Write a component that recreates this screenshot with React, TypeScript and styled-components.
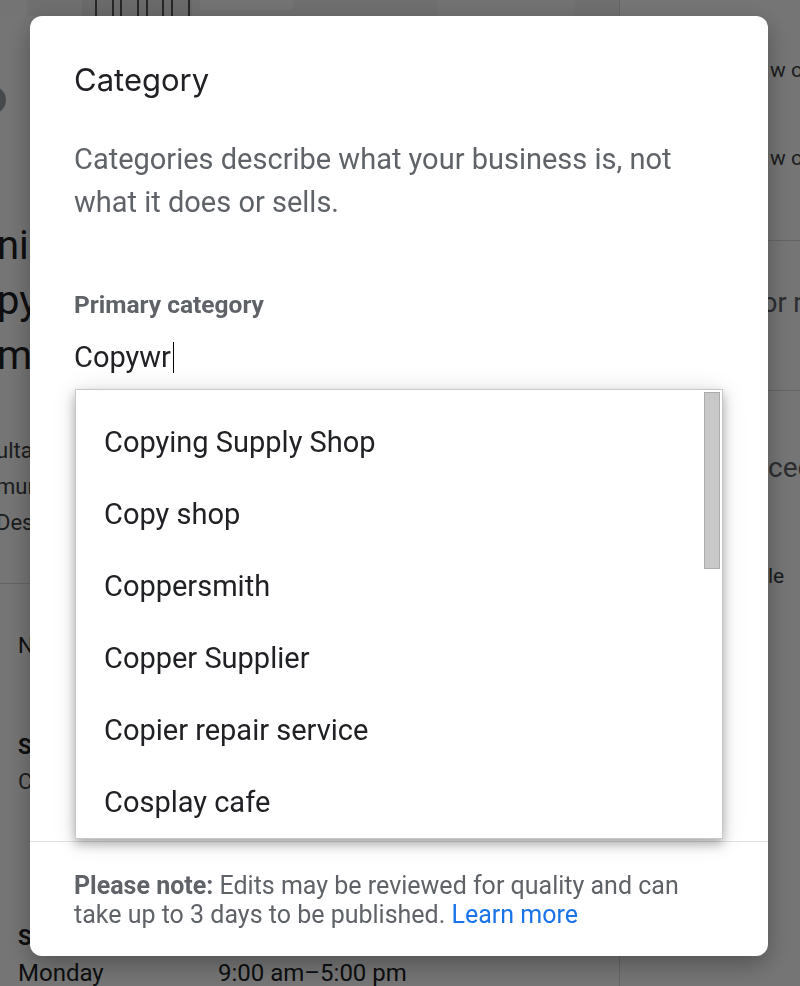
import React from "react";
import styled, { createGlobalStyle } from "styled-components";

const Global = createGlobalStyle`
  html, body { margin: 0; padding: 0; background: #fff; }
  body { font-family: Roboto, "Liberation Sans", Arial, sans-serif; overflow: hidden; }
  * { box-sizing: border-box; }
`;

/* ---------- underlying page ---------- */
const Page = styled.div`
  display: grid;
  grid-template-columns: 619px 1fr;
  height: 986px;
  overflow: hidden;
  background: #fff;
  color: #202124;
`;

const LeftCol = styled.div`
  display: flex;
  flex-direction: column;
  overflow: hidden;
  & > * { flex: none; }
`;

const TopArt = styled.svg`
  display: block;
`;

const Avatar = styled.div`
  width: 28px;
  height: 28px;
  border-radius: 50%;
  background: #9aa0a6;
  margin: 70px 0 0 -22px;
`;

const BigTitle = styled.div`
  margin: 104px 0 0 -3px;
  font-size: 40px;
  line-height: 55px;
  color: #202124;
  white-space: nowrap;
`;

const SmallLines = styled.div`
  margin: 50px 0 0 -4px;
  font-size: 22px;
  line-height: 36px;
  color: #3c4043;
  white-space: nowrap;
`;

const Rule = styled.hr`
  margin: 42px 0 0;
  border: 0;
  height: 1px;
  background: #dadce0;
`;

const Section = styled.div<{ $top: number }>`
  margin-top: ${(p) => p.$top}px;
  padding-left: 18px;
  font-size: 22px;
  line-height: 30px;
  color: #202124;
  white-space: nowrap;
`;

const SectionTitle = styled.div`
  font-weight: 700;
  font-size: 22px;
  line-height: 35px;
`;

const SectionText = styled.div`
  font-size: 22px;
  line-height: 35px;
  color: #3c4043;
`;

const HoursBlock = styled.div`
  margin-top: 121px;
  padding-left: 18px;
  font-size: 24px;
  line-height: 36px;
  color: #202124;
  white-space: nowrap;
`;

const HoursRow = styled.div`
  display: grid;
  grid-template-columns: 200px auto;
`;

const RightCol = styled.div`
  border-left: 1px solid #dadce0;
  display: flex;
  flex-direction: column;
  overflow: hidden;
  & > * { flex: none; }
`;

const SideItem = styled.div<{ $size: number; $lh: number; $top: number; $indent: number; $grey?: boolean }>`
  margin-top: ${(p) => p.$top}px;
  padding-left: ${(p) => p.$indent}px;
  font-size: ${(p) => p.$size}px;
  line-height: ${(p) => p.$lh}px;
  color: ${(p) => (p.$grey ? "#5f6368" : "#3c4043")};
  white-space: nowrap;
`;

const SideRule = styled.div<{ $top: number }>`
  margin-top: ${(p) => p.$top}px;
  height: 1px;
  background: #dadce0;
`;

/* ---------- dialog ---------- */
const Overlay = styled.div`
  position: fixed;
  inset: 0;
  background: rgba(0, 0, 0, 0.54);
  display: flex;
  align-items: flex-start;
  justify-content: flex-start;
  padding: 16px 0 0 30px;
`;

const Dialog = styled.div`
  width: 738px;
  height: 940px;
  background: #fff;
  border-radius: 12px;
  box-shadow: 0 8px 24px rgba(0, 0, 0, 0.3);
  display: flex;
  flex-direction: column;
  overflow: hidden;
`;

const Title = styled.h2`
  margin: 0;
  padding: 44px 44px 0;
  font-family: Inter, "Open Sans", sans-serif;
  font-size: 31px;
  font-weight: 400;
  line-height: 40px;
  color: #202124;
`;

const Body = styled.div`
  flex: 1;
  padding: 38px 44px 0;
`;

const Description = styled.p`
  margin: 0;
  font-size: 29px;
  line-height: 43px;
  color: #5f6368;
`;

const FieldLabel = styled.div`
  margin-top: 66px;
  font-size: 24.5px;
  font-weight: 700;
  line-height: 30px;
  color: #5f6368;
`;

const Field = styled.div`
  position: relative;
  margin-top: 19px;
`;

const InputText = styled.div`
  display: flex;
  align-items: center;
  font-size: 29px;
  line-height: 36px;
  color: #202124;
`;

const Caret = styled.span`
  display: inline-block;
  width: 1.5px;
  height: 31px;
  margin-left: 2px;
  background: #000;
`;

const Dropdown = styled.div`
  position: absolute;
  left: 1px;
  top: 50px;
  width: 648px;
  height: 450px;
  background: #fff;
  border: 1px solid #c8c8c8;
  box-shadow: 0 5px 10px rgba(0, 0, 0, 0.28), 0 2px 24px rgba(0, 0, 0, 0.12);
  overflow: hidden;
  z-index: 2;
`;

const OptionList = styled.ul`
  list-style: none;
  margin: 0;
  padding: 16px 19px 14px 0;
`;

const Option = styled.li`
  height: 72px;
  display: flex;
  align-items: center;
  padding-left: 28px;
  font-size: 29px;
  color: #202124;
  white-space: nowrap;
`;

const ScrollThumb = styled.div`
  position: absolute;
  top: 2px;
  right: 2px;
  width: 16px;
  height: 177px;
  background: #c8c8c8;
  border: 1px solid #acacac;
`;

const Divider = styled.div`
  height: 1px;
  background: #e0e0e0;
  flex: none;
`;

const Footer = styled.div`
  height: 114px;
  flex: none;
  padding: 29px 44px 0;
  font-size: 25px;
  line-height: 29px;
  color: #5f6368;
`;

const Strong = styled.strong`
  font-weight: 700;
`;

const Link = styled.a`
  color: #1a73e8;
  text-decoration: none;
`;

const options = [
  "Copying Supply Shop",
  "Copy shop",
  "Coppersmith",
  "Copper Supplier",
  "Copier repair service",
  "Cosplay cafe",
  "Cosmetics store",
  "Costume jewelry shop",
  "Cotton mill",
  "Coworking space",
  "Corporate office",
  "Court reporter",
  "Counselor",
  "Courier service",
  "Copper mine",
];

export default function App() {
  const lines = [95, 112, 120, 137, 146, 162, 171, 188];
  return (
    <>
      <Global />
      <Page>
        <LeftCol>
          <TopArt width="619" height="16" viewBox="0 0 619 16">
            <rect x="0" y="0" width="27" height="16" fill="#fdfdfd" />
            <rect x="27" y="0" width="592" height="16" fill="#f1f1f1" />
            <rect x="82" y="0" width="110" height="16" fill="#e6e6e6" />
            {lines.map((x) => (
              <rect key={x} x={x} y="0" width="2" height="16" fill="#555" />
            ))}
            <rect x="200" y="0" width="93" height="10" fill="#fbfbfb" />
            <rect x="438" y="0" width="137" height="16" fill="#f9f9f9" />
          </TopArt>
          <Avatar />
          <BigTitle>
            <div>ni</div>
            <div>py</div>
            <div>mı</div>
          </BigTitle>
          <SmallLines>
            <div>ulta</div>
            <div>mun</div>
            <div>Des</div>
          </SmallLines>
          <Rule />
          <Section $top={47}>N</Section>
          <Section $top={68}>
            <SectionTitle>S</SectionTitle>
            <SectionText>C</SectionText>
          </Section>
          <HoursBlock>
            <SectionTitle>S</SectionTitle>
            <HoursRow>
              <span>Monday</span>
              <span>9:00 am–5:00 pm</span>
            </HoursRow>
          </HoursBlock>
        </LeftCol>
        <RightCol>
          <SideItem $size={21} $lh={36} $top={52} $indent={150}>w on Search</SideItem>
          <SideItem $size={21} $lh={36} $top={52} $indent={150}>w on Maps</SideItem>
          <SideRule $top={64} />
          <SideItem $size={27} $lh={40} $top={42} $indent={142} $grey>or more</SideItem>
          <SideRule $top={67} />
          <SideItem $size={28} $lh={40} $top={57} $indent={148} $grey>ced</SideItem>
          <SideItem $size={21} $lh={36} $top={70} $indent={148}>le</SideItem>
        </RightCol>
      </Page>
      <Overlay>
        <Dialog role="dialog" aria-label="Category">
          <Title>Category</Title>
          <Body>
            <Description>
              Categories describe what your business is, not what it does or sells.
            </Description>
            <FieldLabel>Primary category</FieldLabel>
            <Field>
              <InputText>
                Copywr
                <Caret />
              </InputText>
              <Dropdown>
                <OptionList>
                  {options.map((o) => (
                    <Option key={o}>{o}</Option>
                  ))}
                </OptionList>
                <ScrollThumb />
              </Dropdown>
            </Field>
          </Body>
          <Divider />
          <Footer>
            <Strong>Please note:</Strong> Edits may be reviewed for quality and can take up to 3
            days to be published. <Link href="#">Learn more</Link>
          </Footer>
        </Dialog>
      </Overlay>
    </>
  );
}
